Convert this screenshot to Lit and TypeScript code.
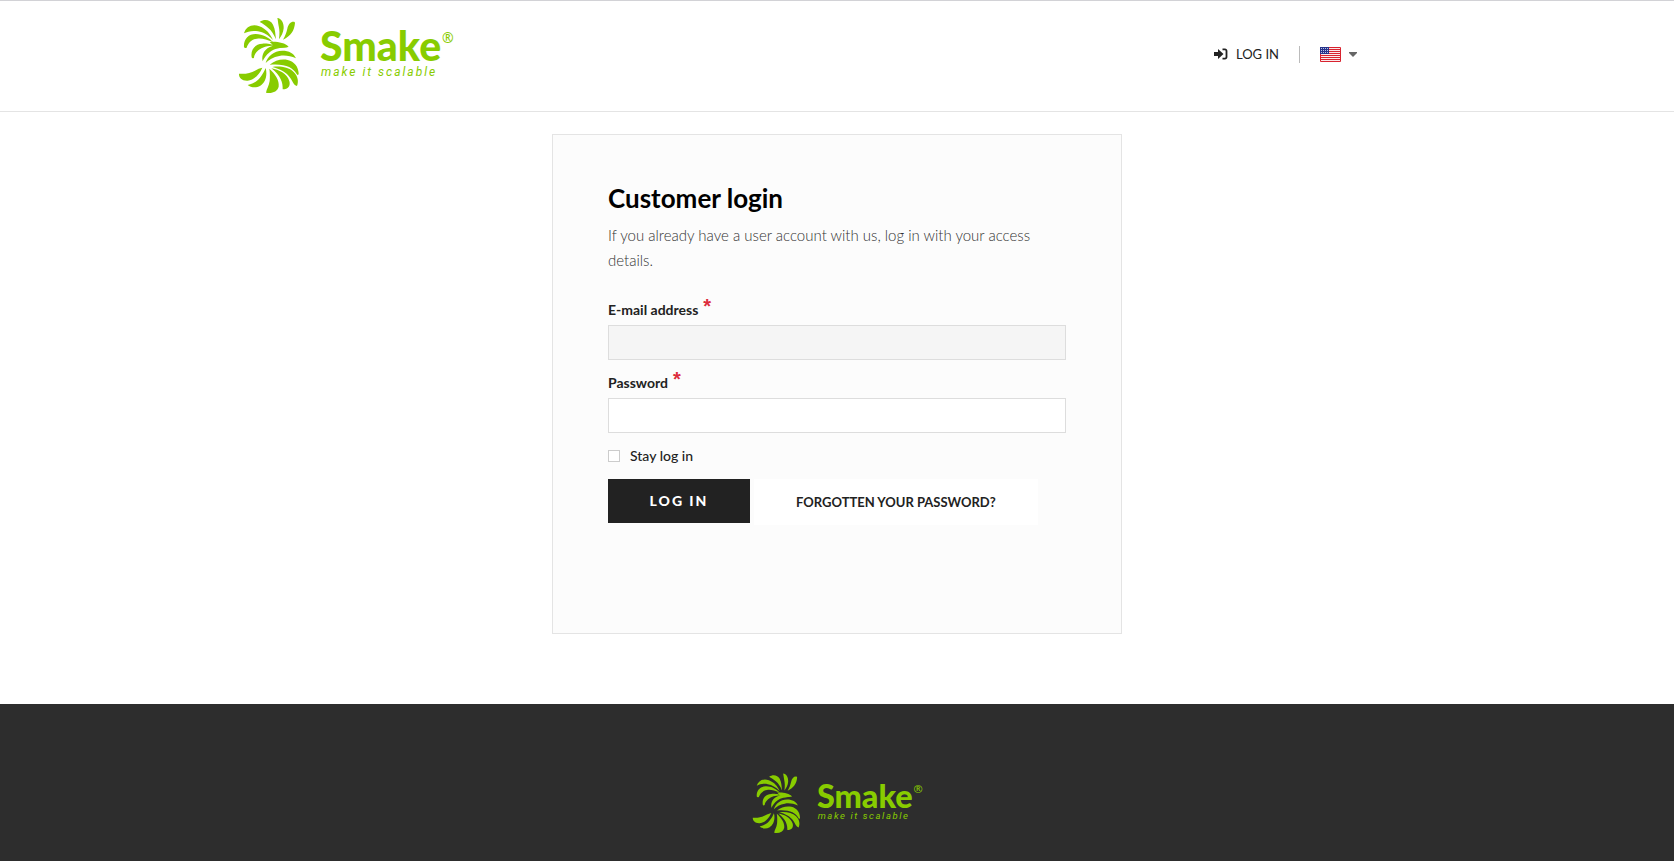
import { LitElement, html, css, svg } from "lit";
import { customElement } from "lit/decorators.js";

const LEAVES = [
  "M27 64C33 44 52 35 73 43C94 51 106 66 114 84C98 68 86 61 69 58C53 55 38 58 27 64Z",
  "M74 30C88 20 106 23 114 38C121 52 121 66 123 82C116 66 110 56 99 47C91 40 82 34 74 30Z",
  "M127 18C139 19 147 32 146 49C145 62 139 72 132 82C134 66 134 55 131 42C129 33 129 25 127 18Z",
  "M180 33C178 56 168 72 144 83C151 71 154 63 157 50C160 36 167 29 175 29C179 29 180 31 180 33Z",
  "M27 105C25 82 40 66 62 66C84 66 102 77 115 91C95 82 80 78 66 80C48 83 40 94 35 107C31 109 28 108 27 105Z",
  "M50 136C46 113 60 96 82 95C104 94 112 98 118 101C97 101 82 105 70 115C62 122 58 129 57 137C54 140 51 139 50 136Z",
  "M104 90C122 88 150 91 161 105C144 107 128 111 114 101C112 97 108 94 104 90Z",
  "M83 148C78 127 90 108 112 102C130 98 144 103 158 106C136 107 118 110 105 120C93 129 87 139 83 148Z",
  "M92 153C98 132 116 117 142 116C162 116 177 124 183 139C166 132 150 129 133 132C115 135 101 143 92 153Z",
  "M104 158C120 146 138 140 158 144C178 149 190 164 191 184C191 190 188 191 185 186C174 166 150 154 104 158Z",
  "M112 165C132 162 160 164 176 180C190 194 191 210 186 222C176 220 173 208 166 198C155 181 134 170 112 165Z",
  "M109 169C132 173 156 185 163 207C167 221 160 232 143 232C144 212 138 192 109 169Z",
  "M103 170C120 185 134 205 131 224C127 239 112 245 93 242C95 230 102 222 104 207C105 194 105 182 103 170Z",
  "M92 168C98 190 91 213 76 221C63 229 48 227 38 219C56 214 66 208 75 197C84 186 88 177 92 168Z",
  "M82 167C72 190 56 204 38 206C20 207 11 197 12 185C32 187 48 182 60 176C68 171 74 169 82 167Z",
];

@customElement("smake-logo")
export class SmakeLogo extends LitElement {
  static styles = css`
    :host { display: block; }
    .logo { display: block; width: 100%; height: auto; fill: #8c0; }
    .name { font: 900 41px Lato, sans-serif; }
    .tag { font: italic 12px Roboto, sans-serif; letter-spacing: 2px; }
    .mark { font: 14px "Noto Sans", sans-serif; }
  `;
  render() {
    return html`<svg class="logo" viewBox="0 0 216 80" role="img" aria-label="Smake, make it scalable">
      <g transform="translate(-3 -4) scale(.3333)">${LEAVES.map((d) => svg`<path d=${d}></path>`)}</g>
      <text class="name" x="82" y="45">Smake</text>
      <text class="mark" x="204" y="27">®</text>
      <text class="tag" x="83" y="60">make it scalable</text>
    </svg>`;
  }
}

@customElement("app-root")
export class AppRoot extends LitElement {
  static styles = css`
    :host {
      display: flex;
      flex-direction: column;
      min-height: 100vh;
      box-sizing: border-box;
      background: #fff;
      color: #222;
      font: 13px/20px Lato, sans-serif;
    }
    *, *::before { box-sizing: border-box; }
    a { color: inherit; text-decoration: none; }
    .header { border-top: 1px solid #d2d2d6; border-bottom: 1px solid #e4e4e4; }
    .bar {
      display: flex;
      justify-content: space-between;
      align-items: flex-start;
      max-width: 1200px;
      height: 110px;
      margin: 0 auto;
      padding: 15px 80px 0 1px;
    }
    .brand { width: 216px; }
    .tools { display: flex; align-items: center; padding-top: 28px; }
    .login { display: flex; align-items: center; gap: 8px; padding-right: 20px; }
    .lang {
      display: flex;
      align-items: center;
      gap: 8px;
      height: 17px;
      padding: 0 0 0 20px;
      border: 0;
      border-left: 1px solid #bbb;
      background: none;
    }
    .main { flex: 1; padding: 22px 16px 70px; }
    .card {
      max-width: 570px;
      min-height: 500px;
      margin: 0 auto;
      padding: 46px 55px;
      border: 1px solid #e4e4e4;
      background: #fcfcfc;
    }
    .title { margin: 0; font-size: 26px; line-height: 34px; font-weight: 700; color: #000; }
    .intro { margin: 8px 0 27px; font-size: 15px; line-height: 25px; font-weight: 300; color: #333; }
    .label { display: flex; gap: 5px; height: 20px; font-size: 14px; font-weight: 700; }
    .star { color: #dc2d3c; font: 700 20px/12px "Liberation Sans", sans-serif; }
    .field {
      display: block;
      width: 100%;
      height: 35px;
      margin: 5px 0 13px;
      padding: 0 10px;
      border: 1px solid #ddd;
      border-radius: 0;
      background: #fff;
      font: inherit;
      outline: none;
    }
    .email { background: #f5f5f5; }
    .stay { display: flex; align-items: center; gap: 10px; font-size: 14px; font-weight: 500; }
    .tick { appearance: none; width: 12px; height: 12px; margin: 0; border: 1px solid #ccc; background: #fff; }
    .tick:checked { background: #222; }
    .actions { display: flex; align-items: flex-start; gap: 4px; margin-top: 13px; }
    .submit {
      width: 142px;
      height: 44px;
      padding: 0;
      border: 0;
      background: #222;
      color: #fff;
      font: 900 14px/20px Lato, sans-serif;
      letter-spacing: 2px;
    }
    .forgot { padding: 13px 42px; background: #fff; font-weight: 700; text-align: center; }
    .footer { display: flex; justify-content: center; height: 157px; padding-top: 68px; background: #2d2d2d; }
    .small { width: 171px; }
  `;

  flag() {
    return html`<svg width="21" height="15" viewBox="0 0 21 15" aria-hidden="true">
      <rect width="21" height="15" rx="1" fill="#d8232f"></rect>
      ${[1, 3, 5, 7, 9, 11, 13].map((y) => svg`<rect x="1" y=${y} width="19" height="1" fill="#fff" opacity=".9"></rect>`)}
      <rect width="9" height="7" fill="#27348b"></rect>
      ${[1, 3, 5].map((y) => [1, 3, 5, 7].map((x) => svg`<rect x=${x} y=${y} width="1" height="1" fill="#b9c2e4"></rect>`))}
    </svg>`;
  }

  render() {
    return html`
      <header class="header">
        <div class="bar">
          <a class="brand" href="#"><smake-logo></smake-logo></a>
          <nav class="tools">
            <a class="login" href="#">
              <svg width="14" height="12" viewBox="0 0 14 12" aria-hidden="true">
                <path fill="#222" d="M0 4h4V1L9.5 6 4 11V8H0z"></path>
                <path fill="none" stroke="#222" stroke-width="1.8" d="M8.5 1.4H11a1.5 1.5 0 0 1 1.5 1.5v6.2A1.5 1.5 0 0 1 11 10.6H8.5"></path>
              </svg>
              <span>LOG IN</span>
            </a>
            <button class="lang" type="button" aria-label="Language" aria-haspopup="true">
              ${this.flag()}
              <svg width="8" height="5" viewBox="0 0 8 5" aria-hidden="true"><path fill="#666" d="M0 0h8v1L4 5 0 1z"></path></svg>
            </button>
          </nav>
        </div>
      </header>
      <main class="main">
        <form class="card" @submit=${(e: Event) => e.preventDefault()}>
          <h1 class="title">Customer login</h1>
          <p class="intro">If you already have a user account with us, log in with your access details.</p>
          <label class="label" for="email">E-mail address <span class="star">*</span></label>
          <input class="field email" id="email" type="email" />
          <label class="label" for="password">Password <span class="star">*</span></label>
          <input class="field" id="password" type="password" />
          <label class="stay"><input class="tick" type="checkbox" />Stay log in</label>
          <div class="actions">
            <button class="submit" type="submit">LOG IN</button>
            <a class="forgot" href="#">FORGOTTEN YOUR PASSWORD?</a>
          </div>
        </form>
      </main>
      <footer class="footer"><smake-logo class="small"></smake-logo></footer>
    `;
  }
}
